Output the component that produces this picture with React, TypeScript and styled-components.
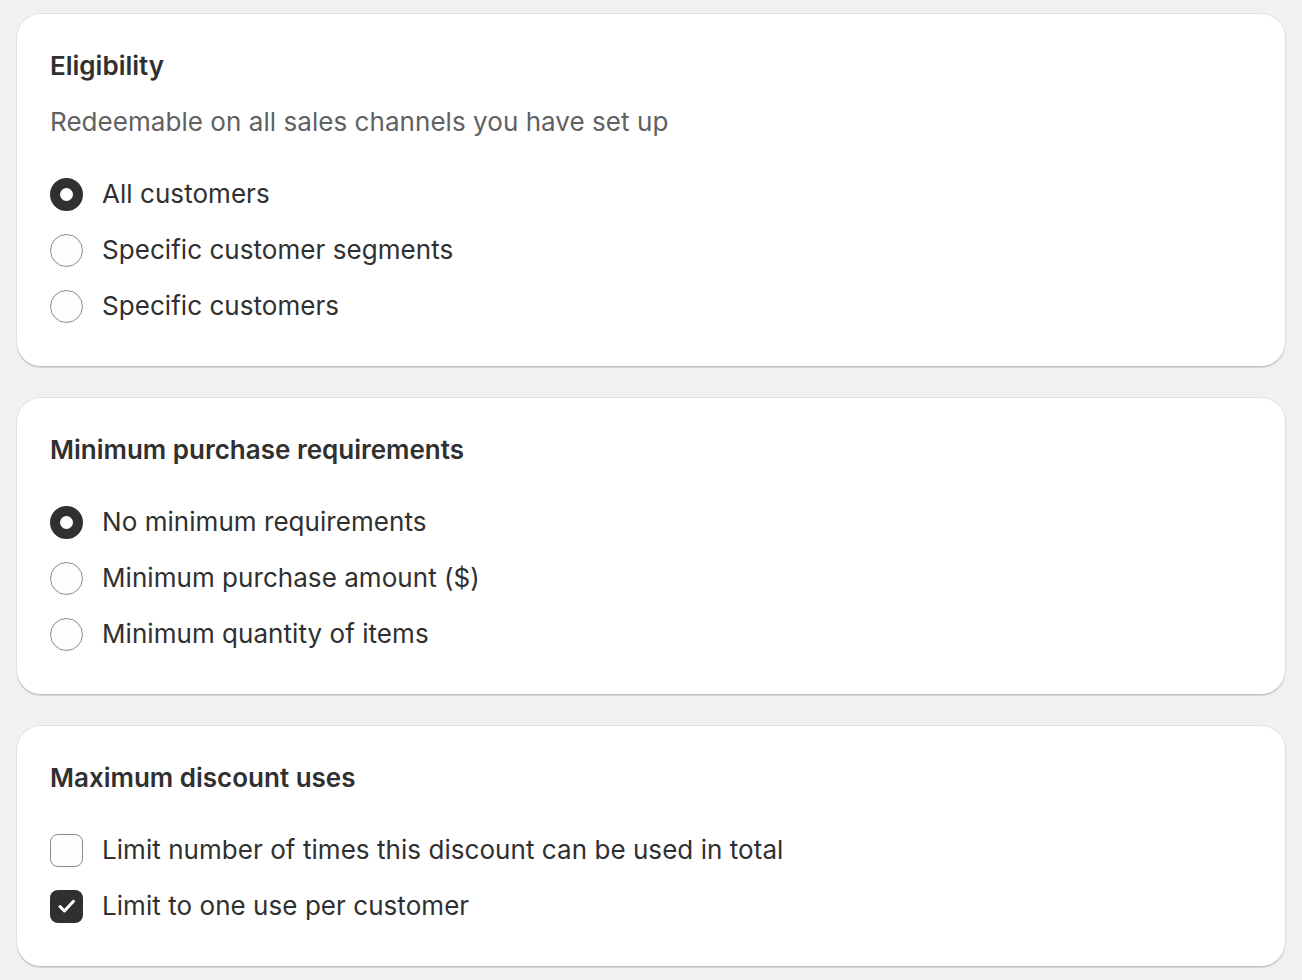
import styled, { createGlobalStyle } from "styled-components";

const GlobalStyle = createGlobalStyle`
  html, body {
    margin: 0;
    padding: 0;
    background: #f1f1f1;
  }
  body {
    font-family: Inter, "Noto Sans", sans-serif;
    color: #303030;
    -webkit-font-smoothing: antialiased;
  }
`;

const Page = styled.div`
  display: flex;
  flex-direction: column;
  gap: 32px;
  padding: 14px 17px 14px 17px;
`;

const Card = styled.section`
  background: #ffffff;
  border-radius: 24px;
  padding: 32px 33px 40px 33px;
  box-shadow: 0 0 0 1px rgba(0, 0, 0, 0.06), 0 2px 1px 0 rgba(0, 0, 0, 0.13);
  display: flex;
  flex-direction: column;
`;

const Title = styled.h2`
  margin: 0;
  font-size: 26px;
  line-height: 40px;
  font-weight: 600;
  color: #303030;
`;

const Subtitle = styled.p`
  margin: 16px 0 0 0;
  font-size: 26px;
  line-height: 40px;
  color: #616161;
  letter-spacing: 0.05px;
`;

const OptionList = styled.div`
  margin-top: 32px;
  display: flex;
  flex-direction: column;
  gap: 16px;
`;

const Option = styled.label`
  display: flex;
  align-items: center;
  gap: 19px;
  height: 40px;
  font-size: 26px;
  line-height: 40px;
  color: #303030;
  letter-spacing: 0.05px;
`;

const RadioMark = styled.span<{ $checked: boolean }>`
  box-sizing: border-box;
  width: 33px;
  height: 33px;
  border-radius: 50%;
  flex-shrink: 0;
  background: ${(p) => (p.$checked ? "#ffffff" : "#fdfdfd")};
  border: ${(p) => (p.$checked ? "10.5px solid #303030" : "1.5px solid #8a8a8a")};
`;

const CheckMark = styled.span<{ $checked: boolean }>`
  box-sizing: border-box;
  width: 33px;
  height: 33px;
  border-radius: 8px;
  flex-shrink: 0;
  display: flex;
  align-items: center;
  justify-content: center;
  background: ${(p) => (p.$checked ? "#303030" : "#fdfdfd")};
  border: ${(p) => (p.$checked ? "none" : "1.5px solid #8a8a8a")};
`;

const Radio = ({ checked, label }: { checked?: boolean; label: string }) => (
  <Option>
    <RadioMark $checked={!!checked} />
    {label}
  </Option>
);

const Checkbox = ({ checked, label }: { checked?: boolean; label: string }) => (
  <Option>
    <CheckMark $checked={!!checked}>
      {checked && (
        <svg width="26" height="26" viewBox="0 0 20 20" fill="none">
          <path
            d="M4.6 10.4l3.4 3.4 7-7.4"
            stroke="#ffffff"
            strokeWidth="2.3"
            strokeLinecap="round"
            strokeLinejoin="round"
          />
        </svg>
      )}
    </CheckMark>
    {label}
  </Option>
);

export default function App() {
  return (
    <>
      <GlobalStyle />
      <Page>
        <Card>
          <Title>Eligibility</Title>
          <Subtitle>Redeemable on all sales channels you have set up</Subtitle>
          <OptionList>
            <Radio checked label="All customers" />
            <Radio label="Specific customer segments" />
            <Radio label="Specific customers" />
          </OptionList>
        </Card>
        <Card>
          <Title>Minimum purchase requirements</Title>
          <OptionList>
            <Radio checked label="No minimum requirements" />
            <Radio label="Minimum purchase amount ($)" />
            <Radio label="Minimum quantity of items" />
          </OptionList>
        </Card>
        <Card>
          <Title>Maximum discount uses</Title>
          <OptionList>
            <Checkbox label="Limit number of times this discount can be used in total" />
            <Checkbox checked label="Limit to one use per customer" />
          </OptionList>
        </Card>
      </Page>
    </>
  );
}
